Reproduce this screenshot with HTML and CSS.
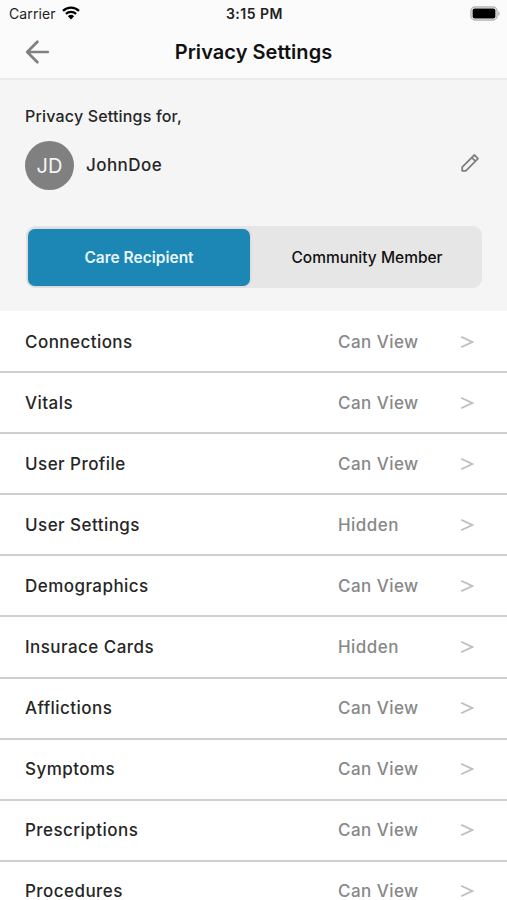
FILE: index.html
```html
<!DOCTYPE html>
<html lang="en">
<head>
  <meta charset="UTF-8" />
  <meta name="viewport" content="width=device-width, initial-scale=1.0" />
  <title>Privacy Settings</title>
  <link rel="stylesheet" href="styles.css">
</head>
<body>
  <header class="header">
    <div class="status-bar">
      <div class="carrier">
        <span class="carrier-name">Carrier</span>
        <svg class="wifi" width="18" height="14" viewBox="0 0 18 14">
          <path d="M1 4.9a11.6 11.6 0 0 1 16 0M3.9 7.9a7.4 7.4 0 0 1 10.2 0" fill="none" stroke="#000" stroke-width="2.3" />
          <path d="M5.9 10.2a4.6 4.6 0 0 1 6.2 0L9 13.4z" fill="#000" />
        </svg>
      </div>
      <span class="time">3:15 PM</span>
      <svg class="battery" width="31" height="16" viewBox="0 0 31 16">
        <rect x="2" y="1" width="26" height="13" rx="4" fill="#fafafa" stroke="#b5b5b5" stroke-width="1.4" />
        <rect x="3.6" y="2.6" width="22.8" height="9.8" rx="2" fill="#000" />
        <path d="M29.2 5.2v4.8c2-.8 2-4 0-4.8z" fill="#b5b5b5" />
      </svg>
    </div>
    <div class="nav-bar">
      <svg class="back" width="26" height="26" viewBox="0 0 26 26">
        <path d="M12.4 2.8L2.2 13l10.2 10.2M2.6 13H22.8" fill="none" stroke="#808080" stroke-width="2.7" stroke-linecap="round" stroke-linejoin="round" />
      </svg>
      <h1 class="title">Privacy Settings</h1>
    </div>
  </header>

  <section class="profile">
    <p class="profile-label">Privacy Settings for,</p>
    <div class="profile-row">
      <div class="avatar">JD</div>
      <span class="name">JohnDoe</span>
      <svg class="edit" width="20" height="20" viewBox="0 0 20 20">
        <path d="M2.2 14.2L14.4 2l3.6 3.6L5.8 17.8H2.2zM11.8 4.6l3.6 3.6" fill="none" stroke="#808080" stroke-width="1.8" stroke-linejoin="round" />
      </svg>
    </div>
    <div class="segments">
      <button class="segment active">Care Recipient</button>
      <button class="segment">Community Member</button>
    </div>
  </section>

  <ul class="list" id="list"></ul>

  <script>
    const list = document.getElementById("list");

    const permissions = [
      { name: "Connections", access: "Can View" },
      { name: "Vitals", access: "Can View" },
      { name: "User Profile", access: "Can View" },
      { name: "User Settings", access: "Hidden" },
      { name: "Demographics", access: "Can View" },
      { name: "Insurace Cards", access: "Hidden" },
      { name: "Afflictions", access: "Can View" },
      { name: "Symptoms", access: "Can View" },
      { name: "Prescriptions", access: "Can View" },
      { name: "Procedures", access: "Can View" }
    ];

    permissions.forEach((item) => {
      const row = document.createElement("li");
      row.className = "row";
      row.innerHTML = `
        <span class="row-name">${item.name}</span>
        <span class="row-access">${item.access}</span>
        <svg class="chevron" width="14" height="14" viewBox="0 0 14 14">
          <path d="M1.2 1.8L12.2 7L1.2 12.2" fill="none" stroke="#bcbec0" stroke-width="1.8" />
        </svg>`;
      list.appendChild(row);
    });
  </script>
</body>
</html>
```

FILE: styles.css
```css
body, html {
  margin: 0;
  padding: 0;
  height: 100%;
  overflow: hidden;
  background: #fff;
  font-family: Inter, "Liberation Sans", sans-serif;
  color: #262626;
}
.header {
  height: 80px;
  box-sizing: border-box;
  background: #fbfbfb;
  border-bottom: 2px solid #ebebeb;
}
.status-bar {
  display: grid;
  grid-template-columns: 1fr auto 1fr;
  align-items: center;
  height: 27px;
  padding: 0 7px 0 9px;
  font-size: 14px;
  color: #222;
}
.carrier {
  display: flex;
  align-items: center;
  gap: 6px;
}
.carrier-name {
  letter-spacing: 0.1px;
}
.wifi {
  margin-top: -2px;
}
.time {
  font-weight: 600;
  letter-spacing: 0.5px;
}
.battery {
  justify-self: end;
}
.nav-bar {
  display: grid;
  grid-template-columns: 26px 1fr 26px;
  align-items: center;
  height: 50px;
  padding: 0 25px;
}
.title {
  margin: 0;
  text-align: center;
  font-size: 20px;
  font-weight: 600;
  letter-spacing: 0.05px;
  color: #111;
}
.profile {
  height: 231px;
  box-sizing: border-box;
  padding: 24px 25px 0;
  background: #f5f5f5;
}
.profile-label {
  margin: 0;
  font-size: 16px;
  line-height: 24px;
  font-weight: 500;
  letter-spacing: 0.18px;
}
.profile-row {
  display: flex;
  align-items: center;
  height: 50px;
  margin-top: 12px;
}
.avatar {
  width: 49px;
  height: 49px;
  border-radius: 50%;
  background: #808080;
  color: #f5f5f5;
  font-size: 20px;
  line-height: 50px;
  text-align: center;
}
.name {
  margin-left: 12px;
  font-size: 17px;
  font-weight: 500;
  letter-spacing: 0.45px;
}
.edit {
  margin: -4px 2px 0 auto;
}
.segments {
  display: flex;
  height: 62px;
  box-sizing: border-box;
  margin: 36px 0 0 1px;
  padding: 2.5px 2px;
  border-radius: 9px;
  background: #e6e6e6;
}
.segment {
  flex: 1;
  padding: 0 0 0 4px;
  border: none;
  border-radius: 7px;
  background: none;
  font-family: inherit;
  font-size: 15.5px;
  font-weight: 500;
  color: #111;
}
.segment.active {
  flex: 0 0 222px;
  padding: 0;
  background: #1c87b4;
  box-shadow: 0 0 3px rgba(0, 0, 0, 0.15);
  color: #e8f5fa;
  font-weight: 600;
}
.list {
  margin: 0;
  padding: 1px 0 0;
  list-style: none;
}
.row {
  display: grid;
  grid-template-columns: 313px 122px 14px;
  align-items: center;
  height: 61.1px;
  box-sizing: border-box;
  padding-left: 25px;
  border-bottom: 2px solid #cfcfcf;
  font-size: 17px;
  font-weight: 500;
  letter-spacing: 0.45px;
}
.row-access {
  color: #888;
}
```
